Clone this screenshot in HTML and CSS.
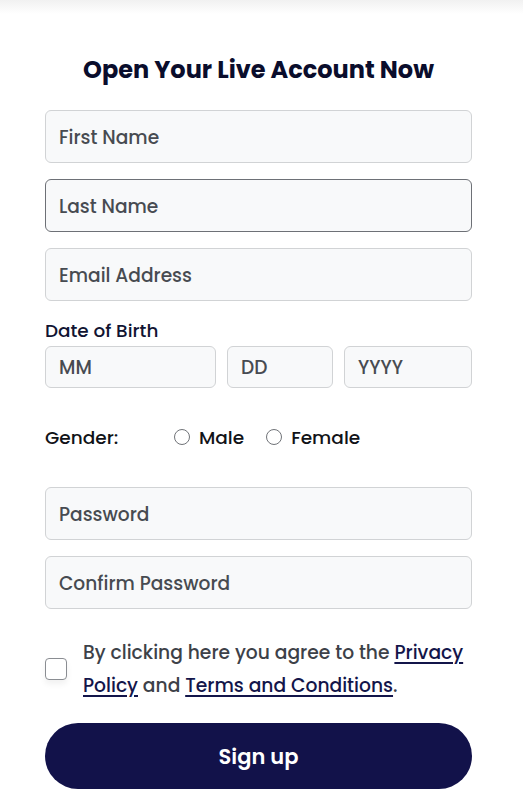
FILE: index.html
```html
<!DOCTYPE html>
<html lang="en">
<head>
<meta charset="utf-8">
<title>Open Your Live Account Now</title>
<link rel="stylesheet" href="styles.css">
</head>
<body>
<div class="topbar"></div>
<main class="form-wrap">
  <h1 class="title">Open Your Live Account Now</h1>
  <form class="form">
    <div class="field">First Name</div>
    <div class="field focused">Last Name</div>
    <div class="field">Email Address</div>
    <div class="label">Date of Birth</div>
    <div class="dob">
      <div class="field small">MM</div>
      <div class="field small">DD</div>
      <div class="field small">YYYY</div>
    </div>
    <div class="gender">
      <span class="gender-label">Gender:</span>
      <span class="radio-opt"><span class="radio"></span>Male</span>
      <span class="radio-opt"><span class="radio"></span>Female</span>
    </div>
    <div class="field pw">Password</div>
    <div class="field">Confirm Password</div>
    <div class="agree">
      <span class="checkbox"></span>
      <div class="agree-text">
        <div class="agree-line">By clicking here you agree to the <a href="#">Privacy</a></div>
        <div class="agree-line"><a href="#">Policy</a> and <a href="#">Terms and Conditions</a>.</div>
      </div>
    </div>
    <button type="button" class="submit">Sign up</button>
  </form>
</main>
</body>
</html>
```

FILE: styles.css
```css
* { box-sizing: border-box; }
html, body { margin: 0; padding: 0; background: #ffffff; }
body {
  font-family: "Poppins", "Open Sans", "DejaVu Sans", sans-serif;
  width: 523px;
  height: 809px;
  overflow: hidden;
}
.topbar {
  height: 14px;
  background: linear-gradient(#f1f1f1, #ffffff);
}
.form-wrap {
  padding: 0 51px 0 45px;
}
.title {
  margin: 41px 0 25px;
  text-align: center;
  font-size: 24px;
  line-height: 30px;
  font-weight: 700;
  color: #0a0d2c;
  letter-spacing: 0;
}
.form {
  display: flex;
  flex-direction: column;
}
.field {
  height: 53px;
  border: 1px solid #d1d3d5;
  border-radius: 6px;
  background: #f8f9fa;
  padding: 1px 0 0 13px;
  display: flex;
  align-items: center;
  font-size: 18.6px;
  font-weight: 500;
  color: #474b51;
  margin-bottom: 16px;
}
.field.focused {
  border: 1.5px solid #6d7076;
}
.label {
  margin-top: 0;
  font-size: 18.4px;
  font-weight: 500;
  line-height: 28px;
  color: #111432;
  margin-bottom: 1px;
}
.dob {
  display: grid;
  grid-template-columns: 171px 106px 128px;
  gap: 11px;
}
.field.small {
  height: 42px;
  margin-bottom: 0;
}
.gender {
  display: flex;
  align-items: center;
  height: 30px;
  margin-top: 34px;
  margin-bottom: 35px;
  font-size: 18.5px;
  font-weight: 500;
  color: #111318;
}
.gender-label {
  width: 129px;
}
.radio-opt {
  display: flex;
  align-items: center;
  margin-right: 22px;
}
.radio {
  width: 16px;
  height: 16px;
  border: 1.3px solid #707378;
  border-radius: 50%;
  background: #fff;
  margin-right: 9px;
}
.agree {
  display: flex;
  align-items: center;
  margin-top: 11px;
  margin-bottom: 21px;
}
.checkbox {
  flex: none;
  width: 22px;
  height: 22px;
  border: 1.5px solid #8a8d92;
  border-radius: 4px;
  background: #fff;
  box-shadow: 0 4px 6px rgba(0,0,0,0.06);
  margin-right: 16px;
}
.agree-text {
  font-size: 18.7px;
  font-weight: 500;
  line-height: 33px;
  color: #3d4148;
}
.agree-line {
  white-space: nowrap;
}
.agree-text a {
  color: #13154a;
  text-decoration: underline;
  text-decoration-thickness: 1.5px;
  text-underline-offset: 3px;
}
.submit {
  height: 66px;
  border: none;
  border-radius: 33px;
  background: #12124a;
  color: #ffffff;
  font-family: inherit;
  font-size: 21px;
  font-weight: 600;
  cursor: pointer;
}
```
